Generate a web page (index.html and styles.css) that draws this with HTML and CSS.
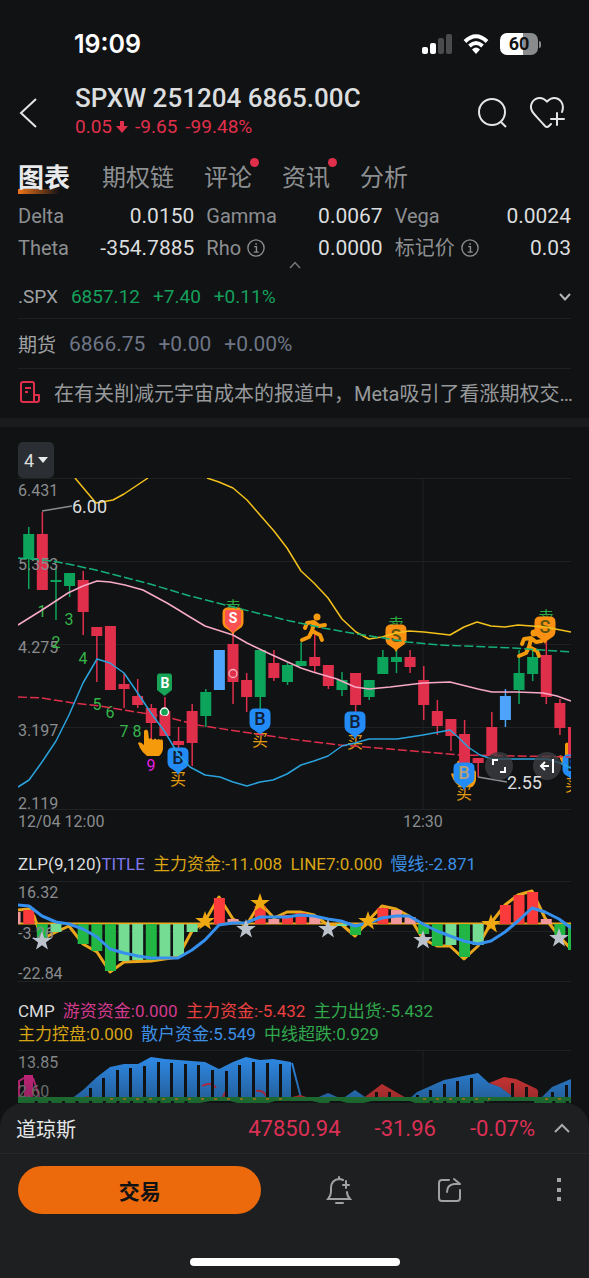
FILE: index.html
```html
<!DOCTYPE html>
<html lang="zh-CN">
<head>
    <meta charset="UTF-8">
    <meta name="viewport" content="width=device-width, initial-scale=1">
    <title>SPXW 251204 6865.00C</title>
    <link rel="stylesheet" href="styles.css">
</head>
<body>

<div class="app">
    <div class="status">
        <span class="clock">19:09</span>
        <div class="status-icons">
            <svg width="30" height="22" viewBox="0 0 30 22">
                <rect x="0" y="14" width="6" height="7" rx="2" fill="#fff"/>
                <rect x="8" y="10" width="6" height="11" rx="2" fill="#fff"/>
                <rect x="16" y="5" width="6" height="16" rx="2" fill="#4a4b4d"/>
                <rect x="24" y="1" width="6" height="20" rx="2" fill="#4a4b4d"/>
            </svg>
            <svg width="26" height="22" viewBox="0 0 26 22" fill="none" stroke="#fff" stroke-width="4">
                <path d="M2 8.500Q13-2 24 8.500"/>
                <path d="M6.500 13Q13 7 19.500 13"/>
                <path d="M9 16.500Q13 12.500 17 16.500L13 21z" fill="#fff" stroke="none"/>
            </svg>
            <div class="battery"><span>60</span></div>
        </div>
    </div>

    <div class="header">
        <button class="icon-btn" aria-label="返回">
            <svg width="20" height="32" viewBox="0 0 20 32" fill="none" stroke="#e4e5e6" stroke-width="2"><path d="M18 2L3 16L18 30"/></svg>
        </button>
        <div class="title">
            <h1>SPXW 251204 6865.00C</h1>
            <p class="quote"><span>0.05</span><svg width="12" height="14" viewBox="0 0 12 14" fill="#e02f4b"><path d="M4 1h4v5h4L6 13 0 6h4z"/></svg><span>-9.65</span><span>-99.48%</span></p>
        </div>
        <button class="icon-btn" aria-label="搜索">
            <svg width="32" height="34" viewBox="0 0 32 34" fill="none" stroke="#e4e5e6" stroke-width="2"><circle cx="15" cy="16" r="13"/><path d="M24 26L29 31"/></svg>
        </button>
        <button class="icon-btn" aria-label="加自选">
            <svg width="36" height="34" viewBox="0 0 36 34" fill="none" stroke="#e4e5e6" stroke-width="2" stroke-linecap="round">
                <path d="M33 16C36 8 31 2 25 2C22 2 20 3.500 18 5.500C16 3.500 14 2 11 2C4 2 0 9 3 15C4.500 18 9 22 16 30Q18 32 20 30L22 28"/>
                <path d="M28 17V29M22 23H35"/>
            </svg>
        </button>
    </div>

    <nav class="tabs">
        <button class="tab active">图表</button>
        <button class="tab">期权链</button>
        <button class="tab dot">评论</button>
        <button class="tab dot">资讯</button>
        <button class="tab">分析</button>
    </nav>

    <main class="main">
        <div class="greeks">
            <div><span>Delta</span><b>0.0150</b></div>
            <div><span>Gamma</span><b>0.0067</b></div>
            <div><span>Vega</span><b>0.0024</b></div>
            <div><span>Theta</span><b>-354.7885</b></div>
            <div><span>Rho <svg class="info" viewBox="0 0 20 20"><use href="#info"/></svg></span><b>0.0000</b></div>
            <div><span>标记价 <svg class="info" viewBox="0 0 20 20"><use href="#info"/></svg></span><b>0.03</b></div>
        </div>
        <button class="fold" aria-label="收起">
            <svg width="12" height="8" viewBox="0 0 12 8" fill="none" stroke="#77797c" stroke-width="1.500"><path d="M1 7L6 1.500L11 7"/></svg>
        </button>

        <div class="linked up">
            <span>.SPX</span><b>6857.12</b><b>+7.40</b><b>+0.11%</b>
            <svg class="more" width="12" height="8" viewBox="0 0 12 8" fill="none" stroke="#b4b5b7" stroke-width="2"><path d="M1 1L6 6.500L11 1"/></svg>
        </div>
        <div class="linked flat">
            <span>期货</span><b>6866.75</b><b>+0.00</b><b>+0.00%</b>
        </div>
        <a class="news" href="#">
            <svg width="22" height="24" viewBox="0 0 22 24" fill="none" stroke="#e02f4b" stroke-width="2" stroke-linejoin="round">
                <path d="M17 22H5Q3 22 3 20V4Q3 2 5 2H14Q16 2 16 4V22H19Q21 22 21 20V15H16"/><path d="M7 8H13M7 12H10"/>
            </svg>
            <span>在有关削减元宇宙成本的报道中，Meta吸引了看涨期权交…</span>
        </a>

        <section class="charts">
            <button class="period">4<i></i></button>

            <div class="price">
                <svg class="chart" viewBox="18 478 553 332">
                    <g class="grid">
                        <path d="M18 478.500H571M18 561.500H571M18 644.500H571M18 727.500H571M18 809.500H571M423 478V810"/>
                    </g>
                    <use href="#hand" x="464" y="775"/>
                    <use href="#hand" x="572" y="757"/>
                    <g id="candles"></g>
                    <g class="axis">
                        <text x="18" y="496">6.431</text>
                        <text x="18" y="570">5.353</text>
                        <text x="18" y="653">4.275</text>
                        <text x="18" y="736">3.197</text>
                        <text x="18" y="809">2.119</text>
                    </g>
                    <g class="count">
                        <text x="42" y="617">1</text><text x="56" y="648">2</text><text x="69" y="625">3</text>
                        <text x="83" y="664">4</text><text x="97" y="710">5</text><text x="110" y="718">6</text>
                        <text x="124" y="737">7</text><text x="137" y="737">8</text>
                        <text class="nine" x="151" y="771">9</text>
                    </g>
                    <g class="sell">
                        <text x="233" y="613">卖</text><text x="396" y="630">卖</text><text x="546" y="623">卖</text>
                    </g>
                    <g class="buy">
                        <text x="178" y="785">买</text><text x="260" y="746">买</text><text x="355" y="748">买</text>
                        <text x="464" y="799">买</text><text x="573" y="791">买</text>
                    </g>
                    <use href="#hand" x="151" y="744"/>
                    <use href="#runner" x="314" y="628"/>
                    <use href="#runner" x="531" y="644"/>

                    <use href="#pin" x="233" y="618" fill="#fb9013"/>
                    <path d="M225 612Q225 610 227 610H239Q241 610 241 612V624L233 633L225 624z" fill="#fa5252"/>
                    <use href="#pin" x="178" y="758" fill="#238bf5"/>
                    <use href="#pin" x="260" y="719" fill="#238bf5"/>
                    <use href="#pin" x="355" y="722" fill="#238bf5"/>
                    <use href="#pin" x="464" y="773" fill="#238bf5"/>
                    <use href="#pin" x="573" y="765" fill="#238bf5"/>
                    <use href="#pin" x="396" y="635" fill="#fb9013"/>
                    <use href="#pin" x="545" y="627" fill="#fb9013"/>
                    <path d="M159 673.500H170Q172 673.500 172 676V690L164.500 696L157 690V676Q157 673.500 159 673.500z" fill="#17a457"/>
                    <g class="mark">
                        <text x="233" y="623" class="white">S</text>
                        <text x="165" y="688" class="white">B</text>
                        <text x="178" y="764" class="big">B</text>
                        <text x="260" y="725" class="big">B</text>
                        <text x="355" y="728" class="big">B</text>
                        <text x="464" y="779" class="big tan">B</text>
                        <text x="573" y="771" class="big">B</text>
                        <text x="396" y="642" class="big olive">S</text>
                        <text x="545" y="633" class="big olive">S</text>
                    </g>
                    <circle cx="164.500" cy="712" r="4" fill="#17a457" stroke="#fff" stroke-width="1.300"/>
                    <circle cx="233" cy="673.500" r="4" fill="none" stroke="#f5b5c0" stroke-width="1.300"/>

                    <g class="line">
                        <polyline stroke="#f3c01c" points="75,478 96,503 113,500 124,494 148,478"/>
                        <polyline stroke="#f3c01c" points="207,478 219,482 233,488 247,500 260,515 274,531 287,548 301,571 314,583 328,598 342,619 356,632 369,639 382,637 396,633 409,631 424,632 450,635 464,627 477,622 491,626 505,627 518,625 545,627 571,632"/>
                        <polyline stroke="#15b077" stroke-dasharray="9 3" points="18,558 52,561 73,565 100,571 150,584 190,596 257,613 290,621 323,628 357,634 390,639 407,642 440,645 513,648 571,652"/>
                        <polyline stroke="#e02f4b" stroke-dasharray="9 3" points="18,697 42,698 73,703 100,706 130,711 167,717 197,725 243,732 290,739 340,745 390,749 460,755 520,756 571,757"/>
                        <polyline stroke="#f7a9c6" points="18,625 42,610 68,593 83,586 97,581 110,582 125,585 143,590 167,603 177,609 190,617 205,626 233,635 247,643 270,654 301,668 313,672 337,679 355,687 369,689 390,687 423,683 450,682 478,689 492,692 517,692 543,693 557,696 571,701"/>
                        <polyline stroke="#2aa3dc" points="18,787 29,780 42,762 56,741 69,715 83,683 97,659 110,663 124,673 137,692 151,713 165,732 178,754 190,767 205,775 220,777 233,782 247,786 260,782 273,780 287,774 301,765 314,761 328,756 342,746 355,743 369,739 397,739 423,735 450,730 458,737 468,747 480,755 492,759 547,759 560,763 571,768"/>
                        <polyline stroke="#8a8c8e" points="42,511 72,506"/>
                        <polyline stroke="#8a8c8e" points="478,777 507,782"/>
                    </g>
                    <text class="peak" x="72" y="513">6.00</text>
                </svg>
                <button class="round full" aria-label="全屏">
                    <svg width="16" height="16" viewBox="0 0 16 16" fill="none" stroke="#fff" stroke-width="2"><path d="M2 7V2H7M14 9V14H9"/></svg>
                </button>
                <button class="round last" aria-label="回到最新">
                    <svg width="16" height="16" viewBox="0 0 16 16" fill="none" stroke="#fff" stroke-width="2"><path d="M2 8H10M6 4L2 8L6 12M14 1V15"/></svg>
                </button>
                <span class="low">2.55</span>
            </div>
            <div class="times"><span>12/04 12:00</span><span class="half">12:30</span></div>

            <div class="legend zlp">
                <span class="c-white">ZLP(9,120)<span class="c-violet">TITLE</span></span>
                <span class="c-gold">主力资金:-11.008</span>
                <span class="c-gold">LINE7:0.000</span>
                <span class="c-blue">慢线:-2.871</span>
            </div>
            <svg class="chart" viewBox="18 880 553 101">
                <path class="grid" d="M18 880.500H571M18 930.500H571M18 980.500H571M423 880V981"/>
                <path d="M18 922.500H571" stroke="#eba71c" stroke-width="2"/>
                <polyline class="thick" stroke="#eba71c" points="18,909 29,908 34,915 42,938 56,931 69,925 83,943 97,951 110,971 124,961 151,960 178,956 192,930 205,920 219,896 233,918 246,925 260,902 274,917 287,911 300,911 314,914 328,924 341,923 355,935 368,920 382,905 396,908 409,915 423,938 437,945 450,945 464,958 478,945 491,922 505,904 518,894 532,890 545,917 559,935 571,948"/>
                <g id="zlpBars"></g>
                <g class="axis">
                    <text x="18" y="897">16.32</text>
                    <text x="18" y="938">-3.26</text>
                    <text x="18" y="978">-22.84</text>
                </g>
                <polyline class="thick" stroke="#3690ee" points="18,904 29,905 42,915 56,921 69,923 83,928 97,936 110,948 124,952 138,955 151,957 178,957 192,949 205,939 219,924 233,922 246,922 260,916 287,916 300,914 314,915 328,918 341,920 355,925 368,922 382,917 396,915 409,915 423,923 437,930 450,935 464,940 478,943 491,940 505,931 518,920 532,907 545,911 559,918 571,927"/>
                <g fill="#eda90f">
                    <use href="#star" x="205" y="920"/><use href="#star" x="260" y="902"/>
                    <use href="#star" x="368" y="920"/><use href="#star" x="491" y="923"/>
                </g>
                <g fill="#bcc2cc">
                    <use href="#star" x="42" y="940"/><use href="#star" x="246" y="928"/><use href="#star" x="328" y="928"/>
                    <use href="#star" x="423" y="939"/><use href="#star" x="559" y="937"/>
                </g>
            </svg>

            <div class="legend cmp">
                <span class="c-white">CMP</span>
                <span class="c-pink">游资资金:0.000</span>
                <span class="c-red">主力资金:-5.432</span>
                <span class="c-green">主力出货:-5.432</span>
                <br>
                <span class="c-gold">主力控盘:0.000</span>
                <span class="c-blue">散户资金:5.549</span>
                <span class="c-green">中线超跌:0.929</span>
            </div>
            <svg class="chart" viewBox="18 1049 553 100">
                <path class="grid" d="M18 1049.500H571M423 1049V1149"/>
                <g fill="#2f8dec">
                    <path d="M71 1098L83 1089L97 1076L110 1066L124 1063H138L151 1056L165 1058L205 1061L219 1068L233 1061L246 1056L260 1059L273 1058L291 1061V1098z"/>
                    <path d="M314 1098L328 1092L342 1098L355 1089L368 1098z"/>
                    <path d="M409 1098L417 1091L444 1079L478 1072L489 1082L502 1086L512 1092L520 1098z"/>
                </g>
                <path d="M292 1062L301 1097" stroke="#2f8dec" stroke-width="2"/>
                <path d="M362 1098L382 1083L408 1098zM489 1082L504 1076L516 1078L537 1088L541 1098H516L500 1086zM284 1098L300 1094L313 1098zM81 1098L87 1095L95 1098z" fill="#ee3a3a"/>
                <path d="M540 1098L552 1086L571 1078V1098z" fill="#2f8dec"/>
                <path d="M202 1085Q211 1080 216 1087M222 1098L226 1090M256 1090Q264 1088 268 1098" stroke="#e02f4b" stroke-width="2" fill="none"/>
                <path d="M24 1074H33V1098H24z" fill="#e3288b"/>
                <path d="M19 1098V1080L24 1077M33 1077L40 1098" stroke="#e3288b" stroke-width="2" fill="none"/>
                <g class="axis">
                    <text x="18" y="1067">13.85</text>
                    <text x="18" y="1096">2.60</text>
                </g>
                <path d="M18 1096H571V1149H540L534 1100H490L480 1104H420L410 1100H372L355 1104L340 1100H330L328 1104L312 1100H275L262 1104H245L230 1100H210L190 1104H18z" fill="#249a40"/>
                <g id="gaps"></g>
                <path d="M110 1098H291M423 1098H490M545 1098H571" stroke="#c9a521" stroke-width="2" stroke-dasharray="3 10"/>
            </svg>
        </section>
    </main>

    <footer class="dock">
        <div class="index">
            <span class="name">道琼斯</span><span>47850.94</span><span>-31.96</span><span>-0.07%</span>
            <svg width="16" height="10" viewBox="0 0 16 10" fill="none" stroke="#a9abad" stroke-width="2"><path d="M1 9L8 2L15 9"/></svg>
        </div>
        <div class="actions">
            <button class="trade">交易</button>
            <div class="tools">
                <button class="icon-btn" aria-label="提醒">
                    <svg width="28" height="28" viewBox="0 0 28 28" fill="none" stroke="#9fa1a3" stroke-width="2" stroke-linecap="round">
                        <path d="M18 4Q16 3 14 3Q6 4 6 12V16Q6 19 3 23H25Q22 20 22 16"/><path d="M14 1V3M11 27H18M21 5V12M18 9H24"/>
                    </svg>
                </button>
                <button class="icon-btn" aria-label="分享">
                    <svg width="28" height="28" viewBox="0 0 28 28" fill="none" stroke="#9fa1a3" stroke-width="2" stroke-linecap="round">
                        <path d="M13 4H6Q3 4 3 7V22Q3 25 6 25H21Q24 25 24 22V14"/><path d="M11 16Q11 9 18 8H23M18 3L24 8"/>
                    </svg>
                </button>
                <button class="icon-btn" aria-label="更多">
                    <svg width="24" height="28" viewBox="0 0 24 28" fill="#a4a6a8"><path d="M10 2h4v4h-4zM10 12h4v4h-4zM10 21h4v4h-4z"/></svg>
                </button>
            </div>
        </div>
        <div class="home"></div>
    </footer>
</div>

<!-- 公用图形 -->
<svg class="defs" width="0" height="0">
    <defs>
        <g id="info" fill="none" stroke="#8d8f91" stroke-width="1.500"><circle cx="10" cy="10" r="9"/><path d="M8 8.500H10.500V14.500M7.500 14.500H13M9.300 5.500H11"/></g>
        <path id="pin" d="M-5-10.500H5Q10.500-10.500 10.500-5V4Q10.500 9 6 11Q2 13 0 17Q-2 13-6 11Q-10.500 9-10.500 4V-5Q-10.500-10.500-5-10.500z"/>
        <path id="star" d="M0-10L2.400-3H9.800L3.900 1.400L6 8.500L0 4.200L-6 8.500L-3.900 1.400L-9.800-3H-2.400z"/>
        <path id="hand" fill="#f59a0b" d="M-7-13Q-5-16-3-13L-2-5Q0-7 2-4Q4-7 6-4Q8-6 9-4Q11-6 12-3V5Q11 10 8 12H-4Q-9 8-11 4L-13-1Q-11-3-7 1z"/>
        <g id="runner" fill="none" stroke="#f59a0b" stroke-width="4" stroke-linecap="round" stroke-linejoin="round">
            <circle cx="3" cy="-11" r="3.500" fill="#f59a0b" stroke="none"/>
            <path d="M-9 0L-7-5L0-6L5-2L11-3M0-5L-2 3L6 7L8 12M-2 3L-5 9L-12 12"/>
        </g>
    </defs>
</svg>

<script src="chart.js"></script>
</body>
</html>
```

FILE: styles.css
```css
*{
    box-sizing: border-box;
    margin: 0;
    padding: 0;
}
body{
    background: #101214;
    color: #dcddde;
    font-family: Roboto, "Noto Sans CJK SC", sans-serif;
    font-size: 20px;
}
button{
    background: none;
    border: none;
    color: inherit;
    font: inherit;
    cursor: pointer;
}
a{
    color: inherit;
    text-decoration: none;
}
svg{
    display: block;
    flex-shrink: 0;
}
.defs{
    position: absolute;
}
.app{
    display: flex;
    flex-direction: column;
    height: 100vh;
}

/* 状态栏 */
.status{
    display: flex;
    flex-shrink: 0;
    align-items: center;
    justify-content: space-between;
    height: 78px;
    padding: 10px 51px 0 74px;
}
.clock{
    color: #fff;
    font: 600 25px Inter, sans-serif;
}
.status-icons{
    display: flex;
    align-items: center;
    gap: 11px;
}
.battery{
    position: relative;
    width: 38px;
    height: 22px;
    border-radius: 7px;
    background: linear-gradient(90deg, #fff 60%, #8a8b8d 60%);
    color: #101214;
    font: 700 18px/22px Roboto, sans-serif;
    text-align: center;
}
.battery::after{
    content: "";
    position: absolute;
    left: 39px;
    top: 8px;
    width: 2px;
    height: 7px;
    border-radius: 0 2px 2px 0;
    background: #8a8b8d;
}

/* 标题 */
.header{
    display: flex;
    flex-shrink: 0;
    align-items: center;
    height: 70px;
    padding: 0 24px 0 18px;
    gap: 20px;
}
.icon-btn{
    flex-shrink: 0;
}
.title{
    flex: 1;
    margin-left: 17px;
    padding-bottom: 5px;
}
.title h1{
    font-size: 26px;
    font-weight: 500;
    line-height: 32px;
    white-space: nowrap;
}
.quote{
    display: flex;
    align-items: center;
    color: #e02f4b;
    font-size: 19px;
    line-height: 26px;
}
.quote svg{
    margin: 0 7px 0 4px;
}
.quote span + span{
    margin-left: 8px;
}

.tabs{
    display: flex;
    flex-shrink: 0;
    gap: 30px;
    height: 52px;
    padding: 8px 18px 0;
    font-size: 24px;
}
.tab{
    position: relative;
    color: #8d8f91;
    line-height: 44px;
}
.tab.active{
    margin-right: 2px;
    color: #e8e9ea;
    font-size: 26px;
    font-weight: 700;
    z-index: 0;
}
.tab.active::after{
    content: "";
    position: absolute;
    left: 0;
    bottom: 6px;
    width: 42px;
    height: 5px;
    background: linear-gradient(90deg, #f0741a, transparent);
    z-index: -1;
}
.tab.dot::after{
    content: "";
    position: absolute;
    right: -7px;
    top: 2px;
    width: 9px;
    height: 9px;
    border-radius: 50%;
    background: #e02f4b;
}

.main{
    flex: 1;
    min-height: 0;
    overflow: hidden;
}
.greeks{
    display: grid;
    grid-template-columns: repeat(3, 1fr);
    column-gap: 12px;
    padding: 0 18px;
}
.greeks div{
    display: flex;
    justify-content: space-between;
    line-height: 32px;
}
.greeks span{
    display: flex;
    align-items: center;
    gap: 6px;
    color: #8d8f91;
    font-size: 20px;
}
.greeks b{
    font-size: 21px;
    font-weight: 400;
}
.info{
    width: 18px;
    height: 18px;
}
.fold{
    display: block;
    margin: -3px auto 6px;
}
.linked{
    display: flex;
    align-items: center;
    height: 50px;
    margin: 0 18px;
    gap: 13px;
    border-bottom: 1px solid #1e2022;
}
.linked.up{
    height: 44px;
}
.linked span{
    color: #a0a2a4;
    font-size: 19px;
}
.linked b{
    font-weight: 400;
}
.up b{
    color: #16a05c;
    font-size: 19px;
}
.flat b{
    color: #6f7686;
    font-size: 21px;
}
.more{
    margin-left: auto;
}
.news{
    display: flex;
    align-items: center;
    height: 49px;
    padding: 0 14px 3px 18px;
    gap: 14px;
    color: #97999b;
    white-space: nowrap;
}

/* 图表 */
.charts{
    padding: 15px 18px 0;
    border-top: 9px solid #191b1d;
}
.period{
    display: flex;
    align-items: center;
    justify-content: center;
    width: 36px;
    height: 36px;
    gap: 4px;
    border-radius: 5px;
    background: #2b2e32;
    font-size: 18px;
}
.period i{
    border: 5px solid transparent;
    border-top: 6px solid #e8e9ea;
    border-bottom: none;
}
.price{
    position: relative;
}
.chart{
    width: 100%;
    height: auto;
}
.grid{
    fill: none;
    stroke: #1f2123;
}
.axis{
    fill: #8a8c8e;
    font-size: 16px;
}
.count, .buy, .sell, .mark{
    font-size: 16px;
    text-anchor: middle;
}
.count{
    fill: #35b54a;
}
.count .nine{
    fill: #e51ee0;
}
.sell{
    fill: #2da944;
}
.buy{
    fill: #e09a12;
}
.mark{
    fill: #102038;
    font-size: 14px;
    font-weight: 700;
}
.mark .big{
    font-size: 18px;
    font-weight: 500;
}
.mark .white{
    fill: #fff;
}
.mark .tan{
    fill: #b3a277;
}
.mark .olive{
    fill: #5b5310;
}
.line, .thick{
    fill: none;
    stroke-width: 1.5;
    stroke-linejoin: round;
}
.thick{
    stroke-width: 3;
}
.peak{
    fill: #dcddde;
    font-size: 18px;
}
.round{
    position: absolute;
    bottom: 30px;
    display: grid;
    place-items: center;
    width: 28px;
    height: 28px;
    border-radius: 50%;
    background: rgba(62, 64, 67, .75);
}
.full{
    right: 58px;
}
.last{
    right: 10px;
}
.low{
    position: absolute;
    right: 29px;
    bottom: 16px;
    font-size: 18px;
    line-height: 22px;
}
.times{
    display: grid;
    grid-template-columns: 385fr 168fr;
    height: 41px;
    color: #8a8c8e;
    font-size: 16px;
    line-height: 24px;
}
.legend{
    font-size: 17px;
    line-height: 23px;
    white-space: nowrap;
}
.legend > span{
    margin-right: 4px;
}
.zlp{
    height: 30px;
    line-height: 26px;
}
.cmp{
    padding-top: 18px;
    margin-bottom: 4px;
}
.c-white{ color: #dcddde; }
.c-violet{ color: #7f78e8; }
.c-gold{ color: #d9a514; }
.c-blue{ color: #3d8fe4; }
.c-pink{ color: #d23a8d; }
.c-red{ color: #ea4040; }
.c-green{ color: #30a84c; }

/* 底部 */
.dock{
    position: relative;
    flex-shrink: 0;
    border-radius: 24px 24px 0 0;
    background: #1d1f21;
}
.dock::before{
    content: "";
    position: absolute;
    left: 0;
    right: 0;
    bottom: 100%;
    height: 50px;
    background: linear-gradient(transparent, rgba(16, 18, 20, .4));
}
.index{
    display: flex;
    align-items: center;
    height: 51px;
    padding: 0 19px 0 16px;
    border-bottom: 1px solid #26282a;
    color: #dc3055;
    font-size: 22px;
}
.index .name{
    flex: 1;
    color: #e4e5e6;
    font-size: 20px;
}
.index span + span{
    margin-right: 34px;
}
.index span:nth-child(4){
    margin-right: 19px;
}
.actions{
    display: flex;
    align-items: center;
    padding: 12px 18px 0;
}
.trade{
    width: 44%;
    height: 48px;
    border-radius: 24px;
    background: #ec690c;
    color: #101214;
    font-size: 21px;
    font-weight: 700;
}
.tools{
    display: flex;
    flex: 1;
    justify-content: space-between;
    margin-left: 64px;
}
.home{
    width: 210px;
    height: 8px;
    margin: 44px auto 12px;
    border-radius: 4px;
    background: #fff;
}
```

FILE: chart.js
```js
var NS = "http://www.w3.org/2000/svg";
var STEP = 13.62;
var colors = {
    r: "#e02f4b", g: "#0ca35a", b: "#4ea4fb",
    R: "#fb3b3b", P: "#f2989a", G: "#22b744", L: "#74dc93"
};

// 第 i 根的中心
function cx(i) {
    return 28.7 + STEP * i;
}
function rect(parent, x, y, w, h, fill) {
    var el = document.createElementNS(NS, "rect");
    el.setAttribute("x", x);
    el.setAttribute("y", y);
    el.setAttribute("width", w);
    el.setAttribute("height", h);
    el.setAttribute("fill", fill);
    document.getElementById(parent).appendChild(el);
}

// 颜色, 最高, 实体上沿, 实体下沿, 最低
var candles = [
    ["g", 527, 534, 559, 589], ["r", 512, 534, 590, 590], ["g", 567, 580, 582, 620], ["g", 573, 573, 586, 597],
    ["r", 571, 580, 612, 635], ["r", 627, 627, 636, 682], ["r", 626, 626, 690, 690], ["r", 674, 684, 689, 708],
    ["r", 679, 696, 705, 708], ["r", 704, 708, 723, 742], ["r", 697, 711, 736, 736], ["r", 727, 741, 745, 755],
    ["r", 704, 711, 743, 766], ["g", 689, 692, 716, 727], ["b", 650, 650, 690, 690], ["r", 620, 644, 682, 704],
    ["r", 673, 680, 697, 712], ["g", 650, 650, 697, 710], ["r", 650, 663, 678, 681], ["g", 663, 665, 682, 685],
    ["g", 642, 661, 666, 666], ["r", 630, 657, 666, 673], ["r", 665, 665, 686, 689], ["g", 672, 680, 690, 696],
    ["r", 673, 673, 705, 712], ["g", 680, 680, 697, 700], ["g", 650, 657, 674, 674], ["g", 645, 657, 662, 673],
    ["r", 650, 657, 667, 673], ["r", 666, 680, 705, 720], ["r", 700, 711, 726, 735], ["r", 719, 719, 736, 751],
    ["r", 720, 734, 765, 770], ["r", 758, 758, 763, 777], ["r", 712, 727, 755, 755], ["b", 689, 696, 720, 727],
    ["g", 650, 673, 690, 704], ["g", 650, 657, 674, 681], ["r", 630, 655, 697, 704], ["r", 699, 703, 728, 735],
    ["r", 727, 727, 757, 757]
];
candles.forEach(function (c, i) {
    var x = cx(i);
    rect("candles", x - 0.7, c[1], 1.5, c[4] - c[1], colors[c[0]]);
    rect("candles", x - 5.5, c[2], 11, c[3] - c[2], colors[c[0]]);
});

// 序号, 颜色, 柱端
var bars = [
    [-1, "P", 911], [0, "R", 909], [1, "G", 938], [2, "L", 931], [4, "G", 943], [5, "G", 950], [6, "G", 970],
    [7, "L", 960], [8, "L", 959], [9, "G", 959], [10, "L", 958], [11, "L", 955], [12, "L", 931],
    [14, "R", 897], [15, "P", 918], [17, "R", 905], [18, "P", 918], [19, "R", 914], [20, "R", 912], [21, "P", 915],
    [23, "L", 925], [24, "G", 934], [26, "R", 907], [27, "P", 909], [28, "P", 916], [29, "G", 933], [30, "G", 945],
    [31, "L", 944], [32, "G", 956], [33, "L", 944], [35, "R", 904], [36, "R", 894], [37, "R", 891],
    [38, "P", 918], [39, "G", 935], [40, "G", 949]
];
bars.forEach(function (b) {
    rect("zlpBars", cx(b[0]) - 5.5, Math.min(b[2], 923), 11, Math.abs(b[2] - 923), colors[b[1]]);
});

// 资金柱之间的缝隙: x, 上沿
[[90, 1087], [103, 1077], [117, 1069], [130, 1067], [144, 1065], [158, 1061], [171, 1062], [185, 1063], [198, 1064],
 [212, 1069], [226, 1070], [239, 1064], [253, 1061], [267, 1062], [280, 1063], [376, 1091], [389, 1091],
 [417, 1094], [430, 1089], [444, 1083], [457, 1080], [471, 1077], [512, 1082], [526, 1086], [539, 1090],
 [552, 1091], [566, 1084]].forEach(function (g) {
    rect("gaps", g[0] - 1, g[1], 3, 1096 - g[1], "#101214");
});
for (var i = 0; i < 41; i++) {
    if (i < 12 || (i > 28 && i < 34) || i > 37) {
        rect("gaps", cx(i) + 6, 1100, 3, 6, "#101214");
    }
}
```
